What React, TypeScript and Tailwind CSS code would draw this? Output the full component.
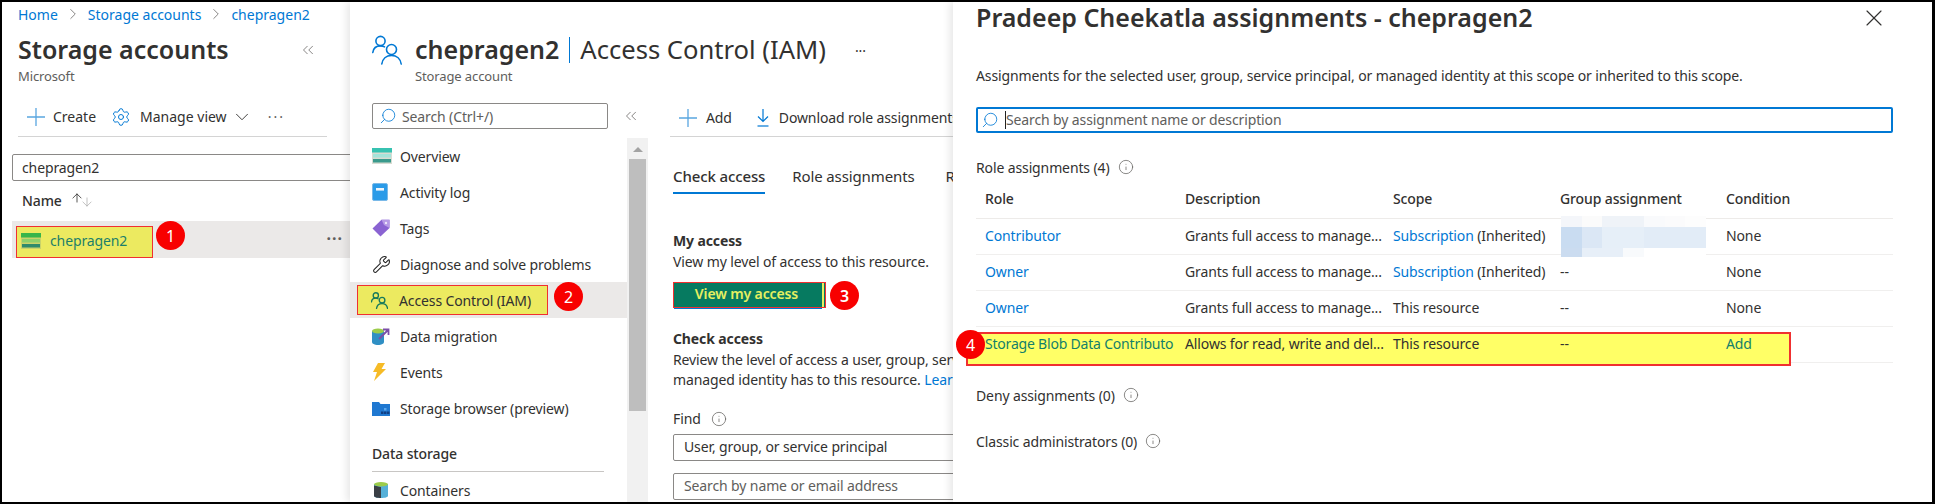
import type { ReactNode } from "react";
import { ArrowDown, ArrowUp, ChevronDown, ChevronRight, ChevronsLeft, Info, Search, Settings, Wrench, X } from "lucide-react";

function Badge({ n, className }: { n: number; className: string }) {
  return (
    <span className={"absolute z-30 flex h-[29px] w-[29px] items-center justify-center rounded-full bg-[#f80000] text-[16px] text-white " + className}>
      {n}
    </span>
  );
}

function PlusIcon() {
  return (
    <svg width="18" height="18" viewBox="0 0 18 18" fill="none" stroke="#59a6e0" strokeWidth="1.3" className="shrink-0">
      <path d="M9 0v18M0 9h18" />
    </svg>
  );
}

function StorageIcon({ muted }: { muted?: boolean }) {
  return (
    <svg width="20" height="16" viewBox="0 0 20 16" className="shrink-0">
      <rect x="0" y="0" width="20" height="16" fill={muted ? "#d9dcd2" : "#c9d36a"} />
      <rect x="0" y="0" width="20" height="4.5" fill={muted ? "#37c2b1" : "#37b54a"} />
      <rect x="1" y="6" width="18" height="3.5" fill={muted ? "#a5e4da" : "#8fd06a"} />
      <rect x="1" y="11" width="18" height="3.5" fill={muted ? "#3a9a8c" : "#2f8a6c"} />
    </svg>
  );
}

function UsersIcon({ size, color, sw }: { size: number; color: string; sw: number }) {
  return (
    <svg width={size} height={size} viewBox="0 0 30 30" fill="none" stroke={color} strokeWidth={sw} strokeLinecap="round" className="shrink-0">
      <circle cx="8.5" cy="6" r="4.6" />
      <path d="M0.8 17.5c0.6-4.2 3.6-6.6 7.7-6.6 1.5 0 2.8 0.3 4 1" />
      <circle cx="19.5" cy="14.5" r="5" />
      <path d="M9.8 29c0.7-5.2 4.4-8.6 9.7-8.6s9 3.4 9.7 8.6" />
    </svg>
  );
}

function NavIcon({ name }: { name: string }) {
  if (name === "overview") return <StorageIcon muted />;
  if (name === "log")
    return (
      <svg width="16" height="18" viewBox="0 0 16 18" className="shrink-0">
        <rect x="0.5" y="0.5" width="15" height="17" rx="1.5" fill="#2b9be8" stroke="#7ab9e8" />
        <rect x="4" y="5" width="8" height="2.6" fill="#eef6fc" />
      </svg>
    );
  if (name === "tags")
    return (
      <svg width="18" height="18" viewBox="0 0 18 18" className="shrink-0">
        <path d="M0.5 9.5 9.5 0.8 17.5 0.8 17.5 9 8.5 17.5Z" fill="#8a63d2" />
        <path d="M9.5 0.8 17.5 0.8 17.5 9 12 6Z" fill="#b79ae6" />
        <circle cx="14" cy="4" r="1.2" fill="#ece4fa" />
      </svg>
    );
  if (name === "wrench") return <Wrench size={19} strokeWidth={1.3} color="#222" className="shrink-0" />;
  if (name === "iam") return <UsersIcon size={17} color="#17795c" sw={2.4} />;
  if (name === "migration")
    return (
      <svg width="18" height="17" viewBox="0 0 18 17" className="shrink-0">
        <path d="M0 3v11c0 1.6 2.6 3 6 3s6-1.4 6-3V3Z" fill="#2f8fc4" />
        <ellipse cx="6" cy="3" rx="6" ry="2.6" fill="#9ccc4a" />
        <path d="M7 11 16 2M11 1.5h5.5V7" stroke="#7b4fa8" strokeWidth="1.8" fill="none" />
      </svg>
    );
  if (name === "events")
    return (
      <svg width="14" height="18" viewBox="0 0 14 18" className="shrink-0">
        <path d="M6 0h7L9.5 6H14L2 18l3-9H1Z" fill="#f6bb26" />
      </svg>
    );
  if (name === "browser")
    return (
      <svg width="18" height="15" viewBox="0 0 18 15" className="shrink-0">
        <path d="M0 1h7l1.5 2H18v12H0Z" fill="#1f78d1" />
        <rect x="9" y="10.5" width="2.5" height="2.5" fill="#0f3f85" />
        <rect x="12" y="10.5" width="2.5" height="2.5" fill="#0f3f85" />
        <rect x="15" y="10.5" width="2.5" height="2.5" fill="#0f3f85" />
        <rect x="12" y="7" width="2.5" height="2.5" fill="#5aa8ee" />
      </svg>
    );
  return (
    <svg width="14" height="16" viewBox="0 0 14 16" className="ml-[2px] shrink-0">
      <path d="M0 2v12c0 1 3 2 7 2s7-1 7-2V2Z" fill="#55b0d8" />
      <path d="M0 3.5 7 5v11c-4 0-7-1-7-2Z" fill="#3a3f45" />
      <ellipse cx="7" cy="2.2" rx="7" ry="2.2" fill="#9ccc4a" />
    </svg>
  );
}

function DownloadIcon() {
  return (
    <svg width="12" height="18" viewBox="0 0 12 18" fill="none" stroke="#0078d4" strokeWidth="1.2" className="shrink-0">
      <path d="M6 0v12M1 7.5 6 12.5 11 7.5" />
      <path d="M0.5 17h11" />
    </svg>
  );
}

function InfoDot() {
  return <Info size={16} strokeWidth={1.1} color="#605e5c" className="shrink-0" />;
}

function NavRow({ icon, children }: { icon: string; children: ReactNode }) {
  return (
    <div className="flex h-[36px] items-center pl-[22px]">
      <span className="flex w-[28px] items-center">
        <NavIcon name={icon} />
      </span>
      <span className="whitespace-nowrap">{children}</span>
    </div>
  );
}

function Link({ children }: { children: ReactNode }) {
  return <span className="text-[#0078d4]">{children}</span>;
}

const cols = "grid grid-cols-[200px_208px_167px_166px_1fr] items-center pb-[2px] pl-[9px]";

export default function App() {
  return (
    <div className="relative flex h-[504px] w-[1935px] overflow-hidden border-t-2 border-r-[3px] border-b-2 border-l-2 border-black bg-white font-['Noto_Sans','Open_Sans',sans-serif] text-[14px] tracking-[-0.12px] text-[#323130]">
      {/* storage accounts */}
      <div className="w-[348px] shrink-0 overflow-hidden">
        <div className="flex h-[24px] items-center pl-[16px] tracking-normal text-[#0078d4]">
          Home
          <ChevronRight size={18} strokeWidth={1} color="#605e5c" className="mx-[6px]" />
          Storage accounts
          <ChevronRight size={18} strokeWidth={1} color="#605e5c" className="mx-[6px]" />
          chepragen2
        </div>
        <div className="mt-[4px] flex h-[40px] items-center pl-[16px]">
          <span className="text-[25px] font-semibold tracking-normal whitespace-nowrap">Storage accounts</span>
          <ChevronsLeft size={18} strokeWidth={1} color="#605e5c" className="ml-[70px]" />
        </div>
        <div className="flex h-[14px] items-center pl-[16px] text-[13px] text-[#605e5c]">Microsoft</div>
        <div className="mt-[16px] ml-[16px] flex h-[37px] w-[309px] items-center border-b border-[#d4d4d4] pb-[3px] pl-[9px] tracking-normal">
          <PlusIcon />
          <span className="ml-[8px]">Create</span>
          <Settings size={20} strokeWidth={1.2} color="#0078d4" className="ml-[15px]" />
          <span className="ml-[9px]">Manage view</span>
          <ChevronDown size={22} strokeWidth={1} className="ml-[4px]" />
          <span className="ml-[15px] tracking-[2px] text-[#605e5c]">···</span>
        </div>
        <div className="mt-[17px] ml-[10px] flex h-[27px] w-[400px] items-center rounded-[2px] border border-[#8a8886] pl-[9px]">chepragen2</div>
        <div className="ml-[20px] flex h-[40px] items-center pb-[2px] font-medium">
          Name
          <ArrowUp size={14} strokeWidth={1.4} color="#323130" className="mb-[4px] ml-[8px]" />
          <ArrowDown size={14} strokeWidth={1.2} color="#a8a8a8" className="mt-[4px] -ml-[4px]" />
        </div>
        <div className="relative ml-[10px] flex h-[37px] items-start justify-between bg-[#ebe9e8] pr-[7px]">
          <div className="mt-[5px] ml-[4px] flex h-[32px] w-[137px] items-center gap-[9px] border-[1.5px] border-[#f03030] bg-[#ecea60] pb-[3px] pl-[4px] text-[#1d7f6a]">
            <StorageIcon />
            chepragen2
          </div>
          <span className="mt-[7px] text-[16px] leading-[20px] font-bold tracking-[1px] text-[#605e5c]">···</span>
          <Badge n={1} className="top-0 left-[144px]" />
        </div>
      </div>

      {/* access control blade */}
      <div className="z-10 w-[603px] shrink-0 overflow-hidden bg-white shadow-[-3px_0_8px_rgba(0,0,0,0.1)]">
        <div className="mt-[28px] flex h-[40px] items-center pl-[22px]">
          <UsersIcon size={30} color="#0078d4" sw={1.6} />
          <span className="ml-[13px] text-[25px] font-semibold tracking-normal whitespace-nowrap">chepragen2</span>
          <span className="mx-[10px] h-[26px] w-[1px] bg-[#0078d4]" />
          <span className="text-[25.6px] tracking-normal whitespace-nowrap">Access Control (IAM)</span>
          <span className="ml-[29px] text-[14px]">···</span>
        </div>
        <div className="flex h-[14px] items-center pl-[65px] text-[13px] text-[#605e5c]">Storage account</div>

        <div className="mt-[19px] flex">
          <div className="w-[298px] shrink-0">
            <div className="flex h-[26px] items-center pl-[22px]">
              <div className="flex h-[26px] w-[236px] items-center rounded-[2px] border border-[#8a8886] pl-[6px] text-[#605e5c]">
                <Search size={18} strokeWidth={1.1} color="#0078d4" className="mr-[5px] -scale-x-100" />
                Search (Ctrl+/)
              </div>
              <ChevronsLeft size={18} strokeWidth={1} color="#605e5c" className="ml-[14px]" />
            </div>
            <div className="mt-[9px] flex h-[364px]">
              <div className="w-[277px] shrink-0">
                <NavRow icon="overview">Overview</NavRow>
                <NavRow icon="log">Activity log</NavRow>
                <NavRow icon="tags">Tags</NavRow>
                <NavRow icon="wrench">Diagnose and solve problems</NavRow>
                <div className="relative flex h-[36px] items-start bg-[#ebe9e8]">
                  <div className="mt-[3px] ml-[7px] flex h-[30px] w-[191px] items-center border-[1.5px] border-[#f03030] bg-[#ecea60] pl-[13px]">
                    <span className="flex w-[28px] items-center">
                      <NavIcon name="iam" />
                    </span>
                    <span className="whitespace-nowrap">Access Control (IAM)</span>
                  </div>
                  <Badge n={2} className="top-0 left-[204px]" />
                </div>
                <NavRow icon="migration">Data migration</NavRow>
                <NavRow icon="events">Events</NavRow>
                <NavRow icon="browser">Storage browser (preview)</NavRow>
                <div className="mt-[17px] flex h-[20px] items-center pl-[22px] font-medium">Data storage</div>
                <div className="mt-[8px] ml-[22px] w-[232px] border-b border-[#c8c6c4]" />
                <NavRow icon="containers">Containers</NavRow>
              </div>
              <div className="flex w-[21px] shrink-0 flex-col items-center bg-[#f1f1f1] px-[2px] pt-[9px]">
                <span className="h-0 w-0 border-x-[5px] border-b-[5px] border-x-transparent border-b-[#a3a3a3]" />
                <span className="mt-[7px] h-[252px] w-full bg-[#bebebe]" />
              </div>
            </div>
          </div>

          <div className="min-w-0 flex-1">
            <div className="ml-[22px] flex h-[34px] items-center border-b border-[#d4d4d4] pb-[4px] pl-[9px] whitespace-nowrap">
              <PlusIcon />
              <span className="ml-[9px]">Add</span>
              <span className="ml-[25px]">
                <DownloadIcon />
              </span>
              <span className="ml-[10px]">Download role assignments</span>
            </div>
            <div className="mt-[26px] ml-[25px] flex h-[31px] text-[15px] whitespace-nowrap">
              <span className="h-[31px] border-b-2 border-[#0078d4] pt-[2px] font-medium">Check access</span>
              <span className="ml-[27px] pt-[2px]">Role assignments</span>
              <span className="ml-[31px] pt-[2px]">Roles</span>
            </div>
            <div className="mt-[37px] ml-[25px] leading-[20px] whitespace-nowrap">
              <div className="font-bold">My access</div>
              <div className="mt-[1px]">View my level of access to this resource.</div>
              <div className="relative mt-[10px] flex h-[26px] w-[153px] items-center justify-center border-[1.5px] border-[#f03030] bg-[#067a60] pr-[6px] pb-[2px] font-semibold text-[#e6f060]">
                View my access
                <span className="absolute top-0 right-[1px] bottom-0 w-[2px] bg-[#e6f060]" />
                <span className="absolute bottom-[-2px] left-0 h-[1px] w-[148px] bg-[#0078d4]" />
                <Badge n={3} className="top-[-2px] left-[156px]" />
              </div>
              <div className="mt-[21px] font-bold">Check access</div>
              <div className="mt-[1px]">Review the level of access a user, group, service principal, or</div>
              <div>
                managed identity has to this resource. <Link>Learn more</Link>
              </div>
              <div className="mt-[19px] flex items-center gap-[10px]">
                Find
                <InfoDot />
              </div>
              <div className="mt-[5px] flex h-[27px] w-[400px] items-center rounded-[2px] border border-[#8a8886] pb-[2px] pl-[10px]">User, group, or service principal</div>
              <div className="mt-[12px] flex h-[27px] w-[400px] items-center rounded-[2px] border border-[#8a8886] pb-[2px] pl-[10px] text-[#605e5c]">Search by name or email address</div>
            </div>
          </div>
        </div>
      </div>

      {/* assignments panel */}
      <div className="relative z-20 min-w-0 flex-1 bg-white pr-[39px] pl-[23px] shadow-[-3px_0_8px_rgba(0,0,0,0.1)]">
        <div className="flex h-[32px] items-center justify-between">
          <span className="text-[25px] font-semibold tracking-normal whitespace-nowrap">Pradeep Cheekatla assignments - chepragen2</span>
          <X size={28} strokeWidth={1} color="#323130" className="mr-[5px]" />
        </div>
        <div className="mt-[31px] flex h-[20px] items-center whitespace-nowrap">
          Assignments for the selected user, group, service principal, or managed identity at this scope or inherited to this scope.
        </div>
        <div className="mt-[22px] flex h-[26px] items-center rounded-[2px] border-2 border-[#0078d4] pl-[3px] text-[#605e5c]">
          <Search size={18} strokeWidth={1.1} color="#0078d4" className="mr-[6px] -scale-x-100" />
          <span className="border-l border-[#222] leading-[18px]">Search by assignment name or description</span>
        </div>
        <div className="mt-[25px] flex h-[20px] items-center gap-[8px] pb-[2px]">
          Role assignments (4)
          <InfoDot />
        </div>
        <div className={cols + " mt-[3px] h-[38px] border-b border-[#edebe9] font-medium"}>
          <span>Role</span>
          <span>Description</span>
          <span>Scope</span>
          <span>Group assignment</span>
          <span>Condition</span>
        </div>
        <div className={cols + " relative h-[36px] border-b border-[#f0efee]"}>
          <Link>Contributor</Link>
          <span>Grants full access to manage...</span>
          <span>
            <Link>Subscription</Link> (Inherited)
          </span>
          <Link>1</Link>
          <span>None</span>
          <div className="absolute top-[-3px] left-[585px] grid w-[145px] grid-cols-7 grid-rows-[11px_21px_9px]">
            <i className="bg-[#f4f6fa]" />
            <i className="bg-[#fbfbfb]" />
            <i className="bg-[#eff3f8]" />
            <i className="bg-[#eff3f8]" />
            <i className="bg-[#f9fafc]" />
            <i className="bg-[#fbfbfc]" />
            <i className="bg-[#fdfdfd]" />
            <i className="bg-[#c9dcf1]" />
            <i className="bg-[#dbe7f5]" />
            <i className="bg-[#e6eff8]" />
            <i className="bg-[#e6eff8]" />
            <i className="bg-[#e2ecf7]" />
            <i className="bg-[#e2ecf7]" />
            <i className="bg-[#e2ecf7]" />
            <i className="bg-[#cbdcf0]" />
            <i className="bg-[#e7eff8]" />
            <i className="bg-[#e7eff8]" />
            <i className="bg-[#f8fafc]" />
            <i className="bg-white" />
            <i className="bg-white" />
            <i className="bg-white" />
          </div>
        </div>
        <div className={cols + " h-[36px] border-b border-[#f0efee]"}>
          <Link>Owner</Link>
          <span>Grants full access to manage...</span>
          <span>
            <Link>Subscription</Link> (Inherited)
          </span>
          <span>--</span>
          <span>None</span>
        </div>
        <div className={cols + " h-[36px] border-b border-[#f0efee]"}>
          <Link>Owner</Link>
          <span>Grants full access to manage...</span>
          <span>This resource</span>
          <span>--</span>
          <span>None</span>
        </div>
        <div className={cols + " relative h-[36px] border-b border-[#f0efee]"}>
          <div className="absolute top-[5px] left-[-10px] h-[34px] w-[825px] border-2 border-[#f03030] bg-[#ffff66]" />
          <span className="relative w-[198px] overflow-hidden tracking-[-0.2px] whitespace-nowrap text-[#13806a]">Storage Blob Data Contributo</span>
          <span className="relative whitespace-nowrap">Allows for read, write and del...</span>
          <span className="relative">This resource</span>
          <span className="relative">--</span>
          <span className="relative text-[#13806a]">Add</span>
          <Badge n={4} className="top-[3px] left-[-20px]" />
        </div>
        <div className="mt-[22px] flex h-[20px] items-center gap-[8px]">
          Deny assignments (0)
          <InfoDot />
        </div>
        <div className="mt-[26px] flex h-[20px] items-center gap-[8px]">
          Classic administrators (0)
          <InfoDot />
        </div>
      </div>
    </div>
  );
}
